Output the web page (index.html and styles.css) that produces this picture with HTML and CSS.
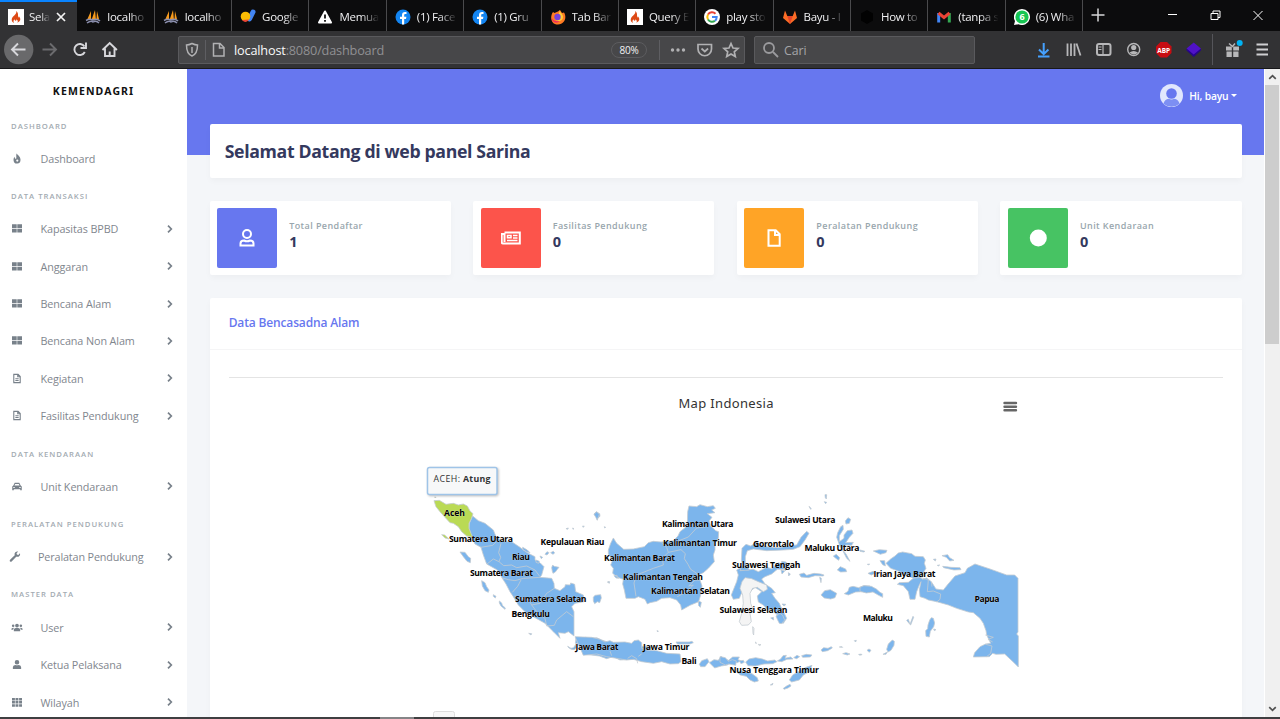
FILE: index.html
```html
<!DOCTYPE html>
<html lang="id">
<head>
<meta charset="utf-8">
<title>Selamat Datang</title>
<link rel="stylesheet" href="styles.css">
</head>
<body>
<svg class="defs" width="0" height="0">
  <symbol id="ci" viewBox="0 0 16 16"><path fill="#fff" d="M0 0h16v16H0z"/><path fill="#dd4814" d="M8.200 2c.6 2-.4 2.800-1.700 4.200C5 7.600 3.700 8.700 3.700 10.700c0 1.700 1 2.700 2.400 3-1-1.200-.7-2.400.5-3.400 0 1 .4 1.400 1 1.400.8 0 .9-.7.6-1.500 1.500.8 2.200 2.200 1.100 3.500 1.800-.6 3.100-1.800 3-3.600-.1-1.400-.9-2.200-1.500-2.900 0 .8-.2 1.200-.6 1.300C9.800 6.500 10.700 3.700 8.200 2z"/></symbol>
  <symbol id="pma" viewBox="0 0 16 16"><path fill="#f79a1c" d="M2 11 6 2v9zM6.500 11 10 1l1 10zM11.500 10 12 2l2 8z"/><path d="M1 11.500q4-2 7-.5 4-2 7 1M2 14q4-3 6-1 3-2 6 1" fill="none" stroke="#8b8fae" stroke-width="1.500"/></symbol>
  <symbol id="fb" viewBox="0 0 16 16"><circle cx="8" cy="8" r="7.500" fill="#1385f2"/><path fill="#fff" d="M7 15.400V10H5V7.700h2V6c0-2 1-3 3-3h1.500v2h-1C9.500 5 9.200 5.500 9.200 6.300v1.400h2.200L11 10H9.200v5.400z"/></symbol>
  <symbol id="grid4" viewBox="0 0 12 11"><path fill="currentColor" d="M1 1.200h4.700v3.900H1zM6.300 1.200H11v3.900H6.300zM1 5.700h4.700v3.900H1zM6.300 5.700H11v3.900H6.300z"/></symbol>
  <symbol id="doc" viewBox="0 0 12 12"><path fill="none" stroke="currentColor" stroke-width="1.200" d="M2.500 1.500h4.700l2.300 2.300v6.700h-7zM6.800 1.500v2.600h2.700M4.200 6.200h3.600M4.200 8.200h3.600"/></symbol>
  <symbol id="flame" viewBox="0 0 12 12"><path fill="currentColor" d="M5.500.5C6.800 2.200 9.800 3.800 9.800 7A3.800 4.200 0 0 1 2.200 7.500C2.200 5.500 3 4.500 3.500 4c0 1.500.3 2.300 1.200 2.300C6 6.300 4.700 3.500 5.500.5z"/><circle cx="6.300" cy="8.300" r="1.200" fill="#fff"/></symbol>
  <symbol id="car" viewBox="0 0 12 12"><path fill="currentColor" fill-rule="evenodd" d="M3.500 2h5L10 5l1.200 1v4H9.500V9h-7v1H.8V6L2 5zM4 3.200 3.200 5h5.600L8 3.200zM2 6.500v1.200h1.500V6.500zm6.500 0v1.200H10V6.500z"/></symbol>
  <symbol id="wrench" viewBox="0 0 12 12"><path d="m1.500 10.500 5-5" stroke="currentColor" stroke-width="2.400" stroke-linecap="round"/><path fill="currentColor" d="M9.500.6 7.700 2.400l.4 1.500 1.500.4 1.800-1.800c.8 2.400-1.300 4.500-3.700 3.700L5.600 4.200C4.900 2 7.200-.2 9.500.6z"/></symbol>
  <symbol id="users" viewBox="0 0 14 12"><path fill="currentColor" d="M7 1.500a2.200 2.200 0 1 1 0 4.400 2.200 2.200 0 0 1 0-4.400zM3.300 10.500V8.700Q3.500 6.500 5.500 6.500h3q2 0 2.200 2.200v1.800zM2.500 2.500a1.500 1.500 0 1 1 0 3 1.500 1.500 0 0 1 0-3zM11.500 2.500a1.500 1.500 0 1 1 0 3 1.500 1.500 0 0 1 0-3zM.3 8.700q0-2.500 2.200-2.500l1 .3q-.9.800-.9 2.200zM13.700 8.700q0-2.500-2.200-2.500l-1 .3q.9.800.9 2.200z"/></symbol>
  <symbol id="person" viewBox="0 0 12 12"><path fill="currentColor" d="M6 1a2.500 2.500 0 1 1 0 5 2.500 2.500 0 0 1 0-5zM1.500 10.800V9q0-2.300 2.500-2.500 2 .9 4 0Q10.500 6.700 10.500 9v1.800z"/></symbol>
  <symbol id="grid9" viewBox="0 0 12 11"><path fill="currentColor" d="M1 1h2.900v2.500H1zm3.500 0h2.900v2.500H4.500zm3.600 0H11v2.500H8.100zM1 4.100h2.900v2.500H1zm3.500 0h2.900v2.500H4.500zm3.600 0H11v2.500H8.100zM1 7.200h2.900v2.500H1zm3.500 0h2.900v2.500H4.500zm3.600 0H11v2.500H8.100z"/></symbol>
  <symbol id="chev" viewBox="0 0 8 10"><path fill="none" stroke="currentColor" stroke-width="1.700" d="M2 1.700 5.300 5 2 8.300"/></symbol>
</svg>

<header class="tabs">
  <div class="tab active"><svg><use href="#ci"/></svg><span>Sela</span><svg class="close" viewBox="0 0 12 12"><path d="m2 2 8 8M10 2l-8 8"/></svg></div>
  <div class="tab"><svg><use href="#pma"/></svg><span>localho</span></div>
  <div class="tab"><svg><use href="#pma"/></svg><span>localho</span></div>
  <div class="tab"><svg viewBox="0 0 16 16"><path d="M13 3 9.500 10" stroke="#4285f4" stroke-width="5" stroke-linecap="round"/><circle cx="5.500" cy="7.500" r="4.800" fill="#fbbc04"/><path d="M2 11q4 4 7-.5" fill="#ea4335"/></svg><span>Google</span></div>
  <div class="tab"><svg viewBox="0 0 16 16"><path fill="#fff" stroke="#fff" stroke-width="2" stroke-linejoin="round" d="m8 2.500 6 11H2z"/><path d="M8 5.500v4M8 11v1.700" stroke="#111" stroke-width="1.800"/></svg><span>Memua</span></div>
  <div class="tab"><svg><use href="#fb"/></svg><span>(1) Face</span></div>
  <div class="tab"><svg><use href="#fb"/></svg><span>(1) Gru</span></div>
  <div class="tab"><svg viewBox="0 0 16 16"><path fill="#ff7a22" d="M3 3l1.500 1L8 2.500 10 1l2 3 2-.5C17 8 15 15.500 8 15.500S-.5 8 3 3z"/><path fill="#ffcf38" d="M10 1c-.5 3 3 3.500 3 7 0 5-7 5-8.500 1.500L7 10z"/><circle cx="7.500" cy="8" r="3.200" fill="#7542d9"/><path d="M1.500 8c1 4 5 5 8 4-2 3-8 2-8-4z" fill="#f02b61"/></svg><span>Tab Bar</span></div>
  <div class="tab"><svg><use href="#ci"/></svg><span>Query E</span></div>
  <div class="tab"><svg viewBox="0 0 16 16"><circle cx="8" cy="8" r="8" fill="#fff"/><g fill="none" stroke-width="2"><path stroke="#ea4335" d="M4 5.500A4.800 4.800 0 0 1 11.500 4.700"/><path stroke="#fbbc05" d="M4 5.500a5 5 0 0 0 0 5"/><path stroke="#34a853" d="M4 10.500a4.800 4.800 0 0 0 7 1.200"/><path stroke="#4285f4" d="M8 8h4.700c0 1.600-.6 2.800-1.700 3.700"/></g></svg><span>play sto</span></div>
  <div class="tab"><svg viewBox="0 0 16 16"><path fill="#fc6d26" d="M1 9 3 1.500 5.300 7h5.400L13 1.500 15 9l-7 6z"/><path fill="#e24329" d="M5.300 7h5.400L8 15z"/></svg><span>Bayu - I</span></div>
  <div class="tab"><svg viewBox="0 0 16 16"><path fill="#020202" d="m8 1 6 3.500v7L8 15l-6-3.500v-7z"/></svg><span>How to</span></div>
  <div class="tab"><svg viewBox="0 0 16 16"><g fill="none" stroke-width="3"><path stroke="#4285f4" d="M2.700 13.500V4"/><path stroke="#34a853" d="M13.300 13.500V4"/><path stroke="#ea4335" d="m2.500 4 5.500 4.500L13.500 4"/></g></svg><span>(tanpa s</span></div>
  <div class="tab"><svg viewBox="0 0 16 16"><path fill="#fff" d="M8 0a8 8 0 1 1-3.500 15.200L0 16l1-4A8 8 0 0 1 8 0z"/><circle cx="8" cy="8" r="6.600" fill="#17c653"/><text x="8" y="11.300" class="badge6">6</text></svg><span>(6) Wha</span></div>
  <svg class="plus" viewBox="0 0 14 14"><path d="M7 .5v13M.5 7h13"/></svg>
  <svg class="win" viewBox="0 0 100 20"><path d="M3 9.500h9M46 8.500h7v6h-7zM48 8v-2h7v6.500h-2M88.500 6l9 9M97.500 6l-9 9"/></svg>
</header>

<nav class="toolbar">
  <svg class="navicons" viewBox="0 0 130 37"><circle cx="18.700" cy="18.500" r="14.700" fill="#69696b"/><g fill="none" stroke="#d7d7db" stroke-width="1.900"><path d="M25.500 18.500H12M18 12.500l-6 6 6 6"/><g stroke="#6b6b6e"><path d="M42.500 18.500h13M50 12.500l6 6-6 6"/></g><path d="M84.500 15.500a5.500 5.500 0 1 0 .3 5.500M86 11.500V17H80.500"/><path d="m102.500 19 7.200-7 7.200 7M105 17.500V25h9.500v-7.500M109.700 25v-4.500" /></g></svg>
  <div class="url">
    <svg class="shield" viewBox="0 0 44 26"><g fill="none" stroke="#b1b1b3" stroke-width="1.500"><path d="M13 6.500q-3 1.500-5.500 1.500 0 9 5.500 11 5.500-2 5.500-11-2.500 0-5.500-1.500z"/><path d="M13 10v6"/><path d="M35.500 6.500h6.500l4 4v8.500H35.500zM41.500 6.500v4.500h4.500" transform="translate(-1)"/></g><path d="M26.500 3v20" stroke="#5e5e62"/></svg>
    <span class="addr"><b>localhost</b>:8080/dashboard</span><span class="pct">80%</span>
    <svg class="urlicons" viewBox="0 0 80 26"><path d="M2.500 3v20" stroke="#5e5e62"/><g fill="#b1b1b3"><circle cx="15.500" cy="13" r="1.700"/><circle cx="21" cy="13" r="1.700"/><circle cx="26.500" cy="13" r="1.700"/></g><g fill="none" stroke="#b1b1b3" stroke-width="1.700"><path d="M41 7.500h13.500v4.500a6.500 6.500 0 0 1-13.500 0zM44.500 11.500l3.300 3 3.300-3"/><path d="m74 6.500 2 4.500 5 .5-3.700 3.300 1 4.800-4.300-2.500-4.300 2.500 1-4.800L67 11.500l5-.5z"/></g></svg>
  </div>
  <div class="search"><svg viewBox="0 0 18 18"><path d="M11 11l5 5" /><circle cx="7" cy="7" r="5"/></svg>Cari</div>
  <svg class="tools" viewBox="1030 0 250 37"><g fill="none" stroke="#b7b7b9" stroke-width="2"><path stroke="#45a1ff" d="M1043.700 12v11M1039 18.500l4.700 4.700 4.700-4.700M1038 25.500h11.500"/><path d="M1067.500 12.500v12.500M1071 12.500v12.500M1074.500 12.500v12.500M1076.500 12.500l4 12" stroke-width="1.800"/><rect x="1097" y="13" width="13.500" height="11" rx="2"/><path d="M1103 13v11M1098.500 16h3M1098.500 18.500h3" stroke-width="1.200"/><circle cx="1133.700" cy="18.500" r="6" stroke-width="1.400"/></g><circle cx="1133.700" cy="16.500" r="2.600" fill="#b7b7b9"/><path d="M1129.500 21.500q4-3 8.500 0-4 4-8.500 0z" fill="#b7b7b9"/><path fill="#c70d12" d="m1160.500 11 6.500 0 4.500 4.500v6.500l-4.500 4.500h-6.500l-4.500-4.500v-6.500z"/><text x="1163.700" y="21.500" class="abp">ABP</text><path fill="#26058a" d="m1186.500 19.500 7.200 6.500 7.200-6.500v-2h-14.400z"/><path fill="#5012c8" d="m1193.700 11.500 7.200 6-7.200 6-7.200-6z"/><path d="M1212.500 3v31" stroke="#55555a"/><path fill="#b7b7b9" d="M1226 15.500h5.800v4h-5.800zM1233.200 15.500h5.800v4h-5.800zM1226.500 20.500h5.300v5.500h-5.300zM1233.200 20.500h5.300v5.500h-5.300z"/><path d="m1229 12.500 3.500 3 2.500-3" fill="none" stroke="#b7b7b9" stroke-width="1.500"/><circle cx="1239.700" cy="12" r="3" fill="#00b3f4"/><path d="M1256.500 13.500h11.500M1256.500 18.500h11.500M1256.500 23.500h11.500" stroke="#cfcfd2" stroke-width="1.800"/></svg>
</nav>

<div class="viewport">
  <aside class="sidebar">
    <div class="brand">KEMENDAGRI</div>
    <h6>DASHBOARD</h6>
    <a><svg><use href="#flame"/></svg><span>Dashboard</span></a>
    <h6>DATA TRANSAKSI</h6>
    <a><svg><use href="#grid4"/></svg><span>Kapasitas BPBD</span><svg class="chev"><use href="#chev"/></svg></a>
    <a><svg><use href="#grid4"/></svg><span>Anggaran</span><svg class="chev"><use href="#chev"/></svg></a>
    <a><svg><use href="#grid4"/></svg><span>Bencana Alam</span><svg class="chev"><use href="#chev"/></svg></a>
    <a><svg><use href="#grid4"/></svg><span>Bencana Non Alam</span><svg class="chev"><use href="#chev"/></svg></a>
    <a><svg><use href="#doc"/></svg><span>Kegiatan</span><svg class="chev"><use href="#chev"/></svg></a>
    <a><svg><use href="#doc"/></svg><span>Fasilitas Pendukung</span><svg class="chev"><use href="#chev"/></svg></a>
    <h6>DATA KENDARAAN</h6>
    <a><svg><use href="#car"/></svg><span>Unit Kendaraan</span><svg class="chev"><use href="#chev"/></svg></a>
    <h6>PERALATAN PENDUKUNG</h6>
    <a class="tight"><svg><use href="#wrench"/></svg><span>Peralatan Pendukung</span><svg class="chev"><use href="#chev"/></svg></a>
    <h6>MASTER DATA</h6>
    <a><svg><use href="#users"/></svg><span>User</span><svg class="chev"><use href="#chev"/></svg></a>
    <a><svg><use href="#person"/></svg><span>Ketua Pelaksana</span><svg class="chev"><use href="#chev"/></svg></a>
    <a><svg><use href="#grid9"/></svg><span>Wilayah</span><svg class="chev"><use href="#chev"/></svg></a>
  </aside>

  <main>
    <div class="topbar"><svg viewBox="0 0 24 24"><circle cx="12" cy="12" r="12" fill="#e1e7fd"/><path d="M3.500 20.500Q5 16 9 15.500q3 1.500 6 0 4 .5 5.500 5Q12 27 3.500 20.500z" fill="#7d8ff3"/><circle cx="12" cy="10" r="5.500" fill="#6777ef"/></svg><span>Hi, bayu</span><i></i></div>
    <section class="card welcome"><h1>Selamat Datang di web panel Sarina</h1></section>
    <div class="stats">
      <section class="card stat"><div class="ico blue"><svg viewBox="0 0 20 20"><g fill="none" stroke="#fff" stroke-width="2"><circle cx="10" cy="6" r="4"/><path d="M3.500 17.500v-2q0-3 3.500-3 3 1.500 6 0 3.500 0 3.500 3v2z"/></g></svg></div><div><h4>Total Pendaftar</h4><p>1</p></div></section>
      <section class="card stat"><div class="ico red"><svg viewBox="0 0 20 20"><path fill="none" stroke="#fff" stroke-width="2" d="M3.500 4.500h15.300v11H2q-1.300 0-1.300-1.500V6h2.800v8"/><path fill="none" stroke="#fff" stroke-width="1.500" d="M6.500 7.500h3.500v2.300H6.500zM12 7.500h4.500M12 10h4.500M6 12.500h10.500"/></svg></div><div><h4>Fasilitas Pendukung</h4><p>0</p></div></section>
      <section class="card stat"><div class="ico orange"><svg viewBox="0 0 20 20"><path fill="none" stroke="#fff" stroke-width="2" d="M4.500 2.200h7.200l4 4v11.500H4.500zM11 2.200v4.700h4.700"/></svg></div><div><h4>Peralatan Pendukung</h4><p>0</p></div></section>
      <section class="card stat"><div class="ico green"><svg viewBox="0 0 20 20"><circle cx="10.300" cy="10" r="8.500" fill="#fff"/></svg></div><div><h4>Unit Kendaraan</h4><p>0</p></div></section>
    </div>
    <section class="card data">
      <h2>Data Bencasadna Alam</h2>
      <div class="body"><hr>
      <svg class="map" viewBox="420 379 610 338">
        <text x="678.500" y="408" textLength="95" class="mtitle">Map Indonesia</text>
        <path d="M1004.500 403h11.500M1004.500 406.700h11.500M1004.500 410.300h11.500" stroke="#666" stroke-width="2.400" stroke-linecap="round"/>
        <g class="land">
        <g transform="translate(420 460) scale(.33333)">
          <path d="M158 168L175 182 195 190 220 210 228 230 250 245 275 245 300 262 310 270 325 280 345 290 345 300 360 308 372 320 365 345 360 352 395 355 402 370 403 385 420 392 435 380 436 374 450 375 452 369 464 373 467 395 490 405 492 425 465 430 455 440 462 455 462 528 445 515 435 520 415 518 420 535 400 515 375 490 340 470 315 455 295 435 280 410 270 395 258 372 245 352 232 330 200 312 190 285 183 262 165 252 155 232 147 205 148 190z"/>
          <path class="aceh" d="M42 122 58 121 78 133 100 130 115 135 130 132 142 138 150 153 159 161 154 176 147 190 147 205 153 220 158 232 140 228 125 215 115 200 100 190 90 188 75 172 60 155 48 140zM65 224l9 1 13 12-12-3zM44 111l4 1-2 2z"/>
          <path d="M120 276L135 277 145 290 152 295 151 308 141 304 130 290zM185 362L195 368 200 380 207 390 205 397 195 392 187 378zM220 404l8 5-2 5-6-5zM238 423l7 6 2 7 9 8-1 4-12-10-5-9zM522 162l7-7 10 6 1 8-6 5-2 7-3-10zM520 412l5-6 17-2 2 10-5 14-7-3-8 6-4-8zM395 323l3-8 4 4 15 3-5 6-6 8-7 4-2-6zM375 283l6-8 6 3-6 7zM392 278l8-4 4 5-5 4zM360 288l8 4-4 4zM348 300l10 4-2 6-8-3zM326 520l9 1-2 4zM562 366l5-1 1 5zM438 206l7-2-2 4zM488 198l5 1-4 3zM458 204l4 2-3 2zM308 262l14 8 8 8-10-2-12-8z"/>
          <path d="M468 534L488 536 497 532 507 536 530 533 545 540 560 545 566 553 580 555 610 552 645 562 660 558 695 562 640 598 600 600 580 590 560 596 538 588 488 582 490 570 500 562 478 565 480 553 466 550zM443 559l10 6 8-2 6-10 3 9-7 7-9-1-8-5z"/>
          <path class="line" d="M183 262L218 256 228 246M201 312L220 297 237 305 242 292 236 278 243 250M237 305L251 317 275 315 290 323 320 318 345 330 360 350M245 353L265 359 285 362 310 355 360 352M277 397L293 379 303 360M284 408L305 416 322 414 335 435 360 430 380 400 403 385M335 435L350 455 375 475 380 498 403 496 410 480 440 455 460 470M569 567L577 582 585 587M488 536L484 550 500 557"/>
        </g>
        <g transform="translate(590 480) scale(.33333)">
          <path d="M70 174L80 190 101 208 130 207 163 200 175 188 190 184 213 186 250 182 264 168 270 155 292 138 293 95 297 78 320 80 330 74 352 80 370 77 376 85 365 90 375 98 352 101 366 112 358 122 362 138 377 152 386 155 385 175 375 190 375 210 370 225 373 245 355 265 340 278 325 285 330 300 336 318 332 345 326 365 300 376 275 390 272 375 260 360 240 353 215 355 200 364 180 368 172 372 165 358 145 350 135 355 108 355 103 330 98 312 100 298 82 292 68 280 70 265 62 255 68 240 55 222 55 210 62 190zM325 363l9 4-3 15-5-5zM54 306l5-1-2 4zM72 287l9-1 5 9-8-1zM12 103l8-7 8 7-3 8-4 8-4-8zM43 140l4 2-3 2zM201 452l4 1-2 3z"/>
          <path d="M-45 470L5 472 30 478 45 486 60 482 70 487 105 486 125 490 132 482 145 480 155 488 155 505 170 510 200 512 230 520 270 522 273 545 265 551 240 552 215 545 190 550 155 545 130 538 110 540 80 535 50 530 20 522 -20 526zM258 486l40 0 8-2 4 4-10 4-38 0zM328 553L335 542 352 536 357 545 345 560 332 560zM358 548l14-9 13 2 8-12 10 7 13 5 12-10 20 0-4 8 8 3-10 6-16-3-14 10-18 3-20 6z"/>
          <path class="line" d="M235 217L273 209 286 221 283 236 294 253 302 268 320 280 330 300M235 217L217 235 220 255 190 265 140 285 132 309 138 349M215 187L230 202 235 217M265 183L295 171 320 144 350 140M330 300L315 300 296 318 310 315 290 335 262 350M60 513l5 14M113 535l12-8 15 9 3 14M155 522l-10 7"/>
        </g>
        <g transform="translate(720 480) scale(.33333)">
          <path d="M50 270L65 262 80 270 100 268 115 275 140 262 155 266 175 248 185 252 185 244 198 246 207 258 192 268 172 268 155 282 135 290 125 297 135 312 155 325 166 338 155 340 165 355 178 370 186 388 178 393 192 398 200 415 190 430 180 428 182 410 165 400 160 390 142 388 130 375 115 366 112 348 125 335 105 322 90 335 70 330 62 345 58 355 40 358 34 345 42 325 50 305 55 285z"/>
          <path d="M60 272L68 255 64 240 66 205 78 193 92 198 105 190 140 200 175 203 205 198 230 195 243 172 260 154 267 160 255 180 240 200 220 208 190 210 140 212 100 207 82 212 76 230 76 250 88 270z"/>
          <path class="pale" d="M66 305L75 293 95 296 115 305 140 315 142 328 130 335 112 322 98 325 90 340 92 370 98 385 90 400 94 425 85 435 65 436 58 425 65 400 70 370 68 345 60 325zM98 440l4 5-1 20-2-5zM106 486l4 3-2 2zM115 493l8 1-5 3z"/>
          <path d="M152 414l8-2 1 8zM168 408l12-8 8 6 6 14-10 11-6-1-6-12zM186 372l12 1-6 5zM315 44l5 0-1 13-3-4zM313 65l7 2-3 4zM267 79l7 7-2 2zM350 172L353 158 362 140 369 136 370 148 358 167 358 185 372 175 372 165 382 152 396 150 399 160 388 172 377 188 400 187 395 196 378 195 370 200 370 212 378 222 390 244 380 235 370 215 360 200 355 185zM376 123L384 113 392 118 388 130 378 132zM340 228l9-5 10 10-3 8-10-7zM352 270l9-10 16 7 3 8-18 1zM238 283l14-4 8 7 22-6 20 2 10 3-2 3-25-1-20 6-22-2zM299 292l5 3-1 13zM303 345l11-13 17-3 19 11-5 13-13 4-19-3zM373 341l11-7 4-12 11-3 17 4 15-6 19 1v20l-22-3-21 1-22 9z"/>
          <path d="M183 270l11 3-8 9zM190 262l10 3-4 8zM205 278l6 4-5 6z"/>
          <path d="M0 530l16 3 9 11 12-5 12 4-2 13-21-4-10 3-16-8zM58 543l12-2 3 6-10 4zM77 546l10-9 20-4 20 4 16 6 21-3 7 5-13 6-26 1-26 6-22-1zM172 543l10-6 7-10 10-1-4 9 17-4 7 6-18 1-16 7zM221 533l10-7 8 4-9 6zM245 527l14-4 17 2-5 6-23 1zM303 510l8-7 13 2 10-5 3 4-14 8-16 3zM51 577l11-4 16 2 18 6 16 12 3 10-12 3-13-6-11-11-18-4zM208 600L218 585 240 572 258 562 276 556 268 575 250 585 238 600 215 606zM190 625l10-7 10-5 3 5-9 6-12 4zM151 615l8-5-2 5zM358 501l8-1 2 2zM368 521l10-3 12 4-8 3zM403 482l6-1-2 5zM416 523l7 0-4 3z"/>
        </g>
        <g transform="translate(860 520) scale(.33333)">
          <path d="M78 130L92 117 105 108 115 99 128 96 155 101 165 109 190 110 196 120 193 130 198 145 190 158 180 172 188 178 200 174 214 185 228 207 250 210 262 195 285 168 315 158 322 145 345 132 390 147 440 165 464 165 474 175 474 336 470 342 475 348 475 441 462 428 434 402 408 403 398 400 388 410 340 411 344 398 360 380 377 372 392 370 380 345 378 332 370 310 360 295 340 278 325 276 290 265 265 255 230 245 205 240 195 235 180 230 178 210 183 185 178 195 170 215 165 238 150 238 145 215 130 197 112 193 118 188 145 187 160 175 120 155 92 145zM60 122l14 0 2 16-8-4zM24 160l16-6 6 6-12 5z"/>
          <path d="M40 93l18-4 23 2-3 7-17 5zM0 90l15 4-4 2-11-2zM22 133l7-1-3 3zM246 107l17-3 6 9 13 8-13 2-10-11zM248 139l25 3 27 1 3 6-21 1-31-7zM220 118l8-1-2 6zM232 136l7-1-4 3zM0 202l12-5 22 2 15 8 11 10 8 4v11l-12-6-17-10-20 3-19-5zM209 300l5-7 6 2 4 14-3 11-10 14-3 17-10-2-1-17 6-6 1-11zM221 327l7 2-5 3zM80 388l5-16 12-12 6 4-1 12-9 15-9 5zM69 403l13-7-4 7zM21 391l6-4 6 4-5 6zM0 403l6 0-3 3zM140 301l5-3 5 15-3-3zM159 289l2 3-9 23-2-2z"/>
          <path class="line" d="M160 175L180 172 205 180 202 215 220 213 242 222 240 238 230 246M214 185L216 200M376 345L400 352 384 358 398 366M377 373L396 378 392 400 380 410"/>
        </g>
        </g>
        <g class="names">
          <text x="444" y="516" textLength="21">Aceh</text><text x="449" y="542" textLength="64">Sumatera Utara</text><text x="540.500" y="545" textLength="64">Kepulauan Riau</text><text x="512" y="560" textLength="18">Riau</text><text x="470" y="576" textLength="63">Sumatera Barat</text><text x="515" y="602" textLength="71.500">Sumatera Selatan</text><text x="511.500" y="617" textLength="38.500">Bengkulu</text><text x="575.500" y="650" textLength="43">Jawa Barat</text><text x="643" y="650" textLength="46.500">Jawa Timur</text><text x="681.500" y="664" textLength="15">Bali</text><text x="662" y="527" textLength="71.500">Kalimantan Utara</text><text x="663" y="546" textLength="74">Kalimantan Timur</text><text x="604" y="561" textLength="71">Kalimantan Barat</text><text x="623" y="580" textLength="80">Kalimantan Tengah</text><text x="651" y="594" textLength="79">Kalimantan Selatan</text><text x="775" y="523" textLength="60.500">Sulawesi Utara</text><text x="753" y="547" textLength="41">Gorontalo</text><text x="804.500" y="551" textLength="55">Maluku Utara</text><text x="732" y="568" textLength="68.500">Sulawesi Tengah</text><text x="719.500" y="613" textLength="68">Sulawesi Selatan</text><text x="729.500" y="673" textLength="89.500">Nusa Tenggara Timur</text><text x="873.500" y="577" textLength="62">Irian Jaya Barat</text><text x="863" y="621" textLength="30">Maluku</text><text x="974.500" y="602" textLength="25">Papua</text>
        </g>
        <rect x="427.500" y="467.500" width="69.500" height="27" rx="2" class="tip"/>
        <text x="433.500" y="482" textLength="26.500" class="tiptext">ACEH:</text><text x="463" y="482" textLength="27.500" class="tiptext strong">Atung</text>
        <rect x="433.500" y="711.500" width="21" height="16" rx="2" fill="#f7f7f7" stroke="#ddd"/>
      </svg></div>
    </section>
  </main>
  <div class="scroll"><svg viewBox="0 0 16 16"><path d="m4.500 10 3.500-3.500 3.500 3.500"/></svg><div class="thumb"></div><svg viewBox="0 0 16 16"><path d="m4.500 6 3.500 3.500L11.500 6"/></svg></div>
</div>
<footer><i></i></footer>
</body>
</html>
```

FILE: styles.css
```css
* { box-sizing: border-box; }
html, body { margin: 0; height: 719px; overflow: hidden; }
body { display: flex; flex-direction: column; font-family: "Open Sans", "Noto Sans", sans-serif; background: #f4f6f9; }
h1, h2, h4, h6, p { margin: 0; }
svg { display: block; flex: none; }
.defs { position: absolute; }

.tabs { height: 31px; flex: none; display: flex; background: #0c0c0d; color: #f0f0f2; font-size: 11.500px; }
.tab { width: 77.36px; flex: none; display: flex; align-items: center; padding: 2px 0 0 8px; border-right: 1px solid #4a4a4c; }
.tab svg { width: 16px; height: 16px; }
.tab span { width: 44px; margin-left: 6px; white-space: nowrap; letter-spacing: -.3px; mask-image: linear-gradient(90deg, #000 50%, transparent 92%); }
.tab.active { background: #323234; border-top: 2px solid #0a84ff; padding-top: 0; border-right: 0; }
.tab.active span { width: 23px; margin-left: 5px; }
.tab .close { width: 12px; height: 12px; margin-left: 3px; stroke: #f4f4f4; stroke-width: 1.700; }
.badge6 { font-size: 9px; font-weight: 700; fill: #fff; text-anchor: middle; }
.plus { width: 14px; height: 14px; margin: 8px 0 0 8px; stroke: #d6d6d8; stroke-width: 1.500; }
.win { width: 100px; height: 20px; margin: 5px 15px 0 auto; fill: none; stroke: #fff; stroke-width: 1; }

.toolbar { height: 38px; flex: none; display: flex; background: #323234; border-bottom: 1px solid #18181a; }
.navicons { width: 130px; height: 37px; }
.url { width: 567px; height: 28px; margin: 5px 9px 0 48px; display: flex; align-items: center; background: #474749; border: 1px solid #5a5a5d; border-radius: 2px; color: #909093; font-size: 12.700px; }
.shield { width: 44px; height: 26px; overflow: visible; }
.addr { margin-left: 11px; flex: 1; letter-spacing: -.17px; }
.addr b { font-weight: 400; color: #f9f9fa; }
.pct { width: 36px; height: 16px; margin-right: 10px; border: 1px solid #5c5c5f; border-radius: 8px; color: #f1f1f3; font-size: 10px; line-height: 14px; text-align: center; letter-spacing: -.2px; }
.urlicons { width: 80px; height: 26px; margin-right: 7px; overflow: visible; }
.search { width: 221px; height: 28px; margin-top: 5px; display: flex; align-items: center; gap: 4px; padding-left: 7px; background: #474749; border: 1px solid #5a5a5d; border-radius: 2px; font-size: 12.300px; color: #a5a5a8; }
.search svg { width: 18px; height: 18px; fill: none; stroke: #9b9b9e; stroke-width: 1.800; }
.tools { width: 250px; height: 37px; margin-left: auto; }
.abp { font-size: 6.500px; font-weight: 700; fill: #fff; text-anchor: middle; }

.viewport { height: 648px; flex: none; display: flex; overflow: hidden; }
.sidebar { width: 187.2px; flex: none; background: #fff; color: #868e96; }
.brand { height: 37.5px; line-height: 44px; text-align: center; color: #111; font-size: 10.500px; font-weight: 700; letter-spacing: 1.120px; font-family: "Noto Sans", sans-serif; }
.sidebar h6 { height: 33px; padding: 12px 0 0 11px; font-size: 7.700px; line-height: 14px; font-weight: 600; color: #a3abb2; letter-spacing: 1px; }
.sidebar a { height: 37.45px; display: flex; align-items: center; padding: 0 13.500px 0 11px; font-size: 10.800px; color: #7f868e; }
.sidebar a svg { width: 12px; height: 11px; color: #78818a; }
.sidebar a span { flex: 1; margin-left: 17.500px; letter-spacing: -.1px; white-space: nowrap; }
.sidebar a .chev { width: 8px; height: 10px; }
.sidebar a.tight { padding-left: 8.500px; }
.sidebar a.tight span { letter-spacing: -.14px; }

main { flex: 1; min-width: 0; padding: 0 22.500px; background: linear-gradient(#6777ef 86.5px, #f4f6f9 86.5px); }
.topbar { height: 55px; display: flex; justify-content: flex-end; align-items: center; color: #fff; font-size: 10.300px; font-weight: 600; letter-spacing: -.15px; padding: 0 5px 2px 0; }
.topbar svg { width: 23px; height: 23px; margin-right: 6px; }
.topbar i { margin-left: 2px; border: 3px solid transparent; border-top-color: #fff; border-bottom: 0; }
.card { background: #fff; border-radius: 2px; box-shadow: 0 3px 6px rgba(0,0,0,.03); }
.welcome { height: 54px; padding: 0 15px; }
h1 { font-size: 17.700px; line-height: 54px; font-weight: 700; color: #34395e; letter-spacing: -.35px; }
.stats { display: grid; grid-template-columns: repeat(4, 1fr); gap: 22.5px; margin: 22.500px 0; }
.stat { height: 74.5px; padding: 7.500px; display: flex; gap: 12px; }
.ico { width: 60px; height: 60px; border-radius: 2px; display: flex; align-items: center; justify-content: center; }
.ico svg { width: 20px; height: 20px; }
.blue { background: #6777ef; }
.red { background: #fc544b; }
.orange { background: #ffa426; }
.green { background: #47c363; }
.stat h4 { margin-top: 9.500px; font-size: 9px; line-height: 15px; font-weight: 600; color: #98a6ad; letter-spacing: .42px; white-space: nowrap; }
.stat p { font-size: 14.500px; line-height: 18px; font-weight: 700; color: #34395e; }
.data { height: 460px; }
h2 { height: 52px; padding-left: 19px; line-height: 50px; border-bottom: 1px solid #f5f5f6; font-size: 12px; font-weight: 600; color: #6777ef; letter-spacing: -.15px; }
.body { padding: 27.500px 18.500px 0 19px; }
hr { height: 1px; margin: 0; border: 0; background: #e4e4e4; }
.map { width: 610px; height: 338px; margin: .5px 0 0 191.300px; }
.mtitle { font-size: 13px; fill: #333; font-family: "Noto Sans", sans-serif; }
.land path { fill: #7cb5ec; stroke: #c4cbd2; stroke-width: 2.400; stroke-linejoin: round; }
.land .aceh { fill: #bada55; }
.land .pale { fill: #f4f4f4; }
.land .line { fill: none; }
.names { font-size: 8.600px; font-weight: 700; fill: #000; }
.names text { text-shadow: 0 0 1px rgba(255,255,255,.8); }
.tip { fill: #f7f8f9; stroke: #9fc4e8; stroke-width: 1.500; filter: drop-shadow(1px 1px 1px rgba(0,0,0,.25)); }
.tiptext { font-size: 8.800px; fill: #333; }
.strong { font-weight: 700; }
.scroll { width: 16px; flex: none; display: flex; flex-direction: column; background: #f0f0f0; border-left: 1px solid #fff; }
.scroll svg { width: 15px; height: 16px; fill: none; stroke: #505050; stroke-width: 1.800; }
.scroll svg:last-child { margin-top: auto; }
.thumb { height: 259px; background: #cdcdcd; margin-right: 1px; }
footer { height: 2px; background: #3f3f41; flex: none; }
footer i { display: block; width: 34px; height: 2px; margin-left: 380px; background: #858587; }
```
